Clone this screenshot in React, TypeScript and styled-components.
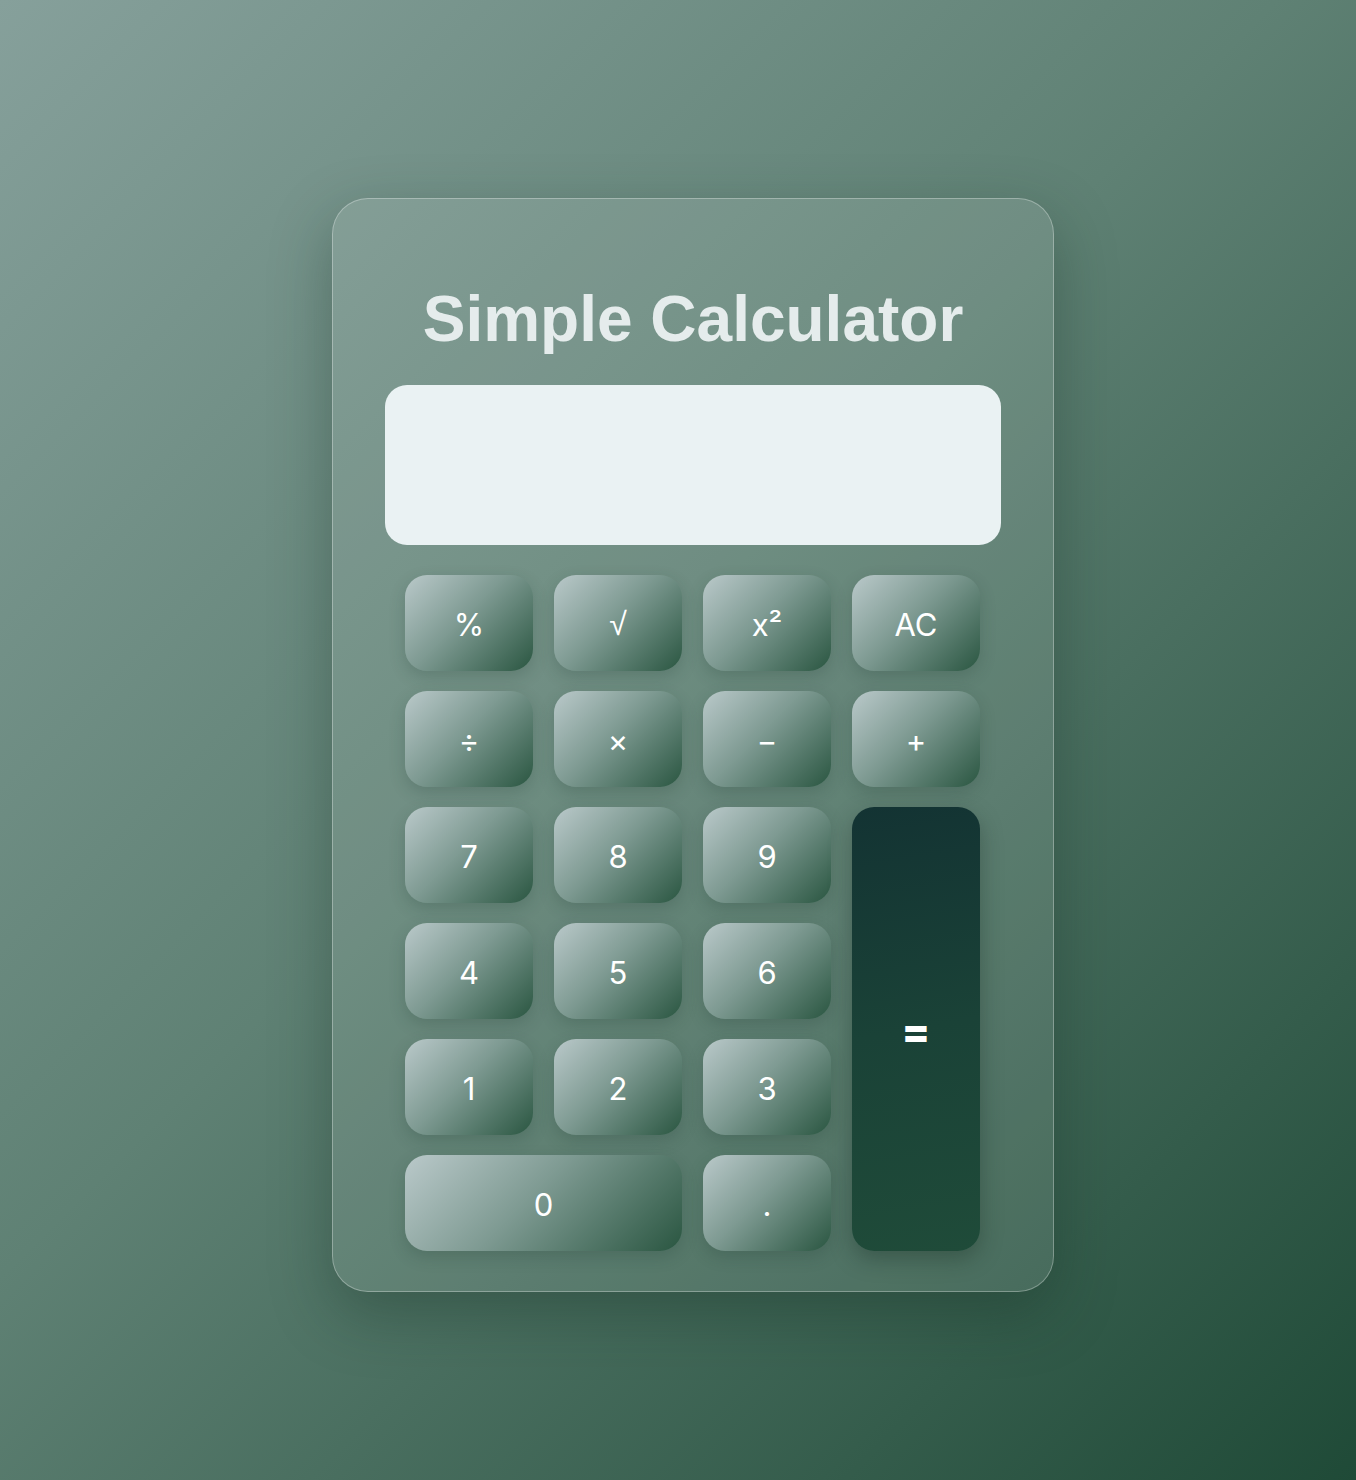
import React from "react";
import styled, { createGlobalStyle } from "styled-components";

const Global = createGlobalStyle`
  html, body { margin: 0; padding: 0; }
  body {
    min-height: 1480px;
    background: linear-gradient(135deg, #86a09b 0%, #5f8174 45%, #1f4a37 100%);
    font-family: Inter, "Liberation Sans", sans-serif;
  }
`;

const Page = styled.main`
  min-height: 1480px;
  box-sizing: border-box;
  display: flex;
  justify-content: center;
  align-items: flex-start;
  padding: 198px 0 0 30px;
`;

const Card = styled.section`
  width: 722px;
  box-sizing: border-box;
  padding: 88px 52px 40px;
  border-radius: 36px;
  border: 1px solid rgba(255, 255, 255, 0.3);
  background: rgba(255, 255, 255, 0.1);
  box-shadow: 0 22px 60px rgba(20, 45, 35, 0.35);
  display: flex;
  flex-direction: column;
`;

const Title = styled.h1`
  margin: 0 0 34px;
  font-family: "Liberation Sans", Arial, sans-serif;
  font-weight: 700;
  font-size: 64px;
  line-height: 64px;
  text-align: center;
  color: #e5ecec;
`;

const Display = styled.div`
  flex-shrink: 0;
  height: 160px;
  border-radius: 22px;
  background: #eaf2f3;
  margin-bottom: 30px;
`;

const Keys = styled.div`
  display: grid;
  grid-template-columns: repeat(4, 128px);
  grid-auto-rows: 96px;
  column-gap: 21px;
  row-gap: 20px;
  padding: 0 20px;
`;

const Key = styled.button<{ $span?: number; $tall?: boolean }>`
  grid-column: span ${(p) => p.$span ?? 1};
  ${(p) => (p.$tall ? "grid-row: span 4;" : "")}
  border: none;
  border-radius: 22px;
  background: linear-gradient(135deg, #bac9ca 0%, #7e9a92 45%, #2a5641 100%);
  box-shadow: 0 6px 16px rgba(30, 60, 48, 0.22);
  color: #ffffff;
  font-family: Inter, "Liberation Sans", sans-serif;
  font-size: 31px;
  font-weight: 400;
  display: flex;
  align-items: center;
  justify-content: center;
  cursor: pointer;
  padding: 2px 0 0;
`;

const EqualsKey = styled(Key)`
  background: linear-gradient(170deg, #133333 0%, #1a4237 50%, #1f4b39 100%);
  box-shadow: 0 8px 22px rgba(20, 40, 32, 0.35);
  font-family: Inter, "Liberation Sans", sans-serif;
  font-weight: 800;
  font-size: 42px;
`;

const Radical = styled.span`
  font-family: "DejaVu Sans", sans-serif;
  font-weight: 300;
  font-size: 32px;
`;

export default function App() {
  return (
    <>
      <Global />
      <Page>
        <Card>
          <Title>Simple Calculator</Title>
          <Display />
          <Keys>
            <Key>%</Key>
            <Key>
              <Radical>√</Radical>
            </Key>
            <Key>x²</Key>
            <Key>AC</Key>
            <Key>÷</Key>
            <Key>×</Key>
            <Key>−</Key>
            <Key>+</Key>
            <Key>7</Key>
            <Key>8</Key>
            <Key>9</Key>
            <EqualsKey $tall>=</EqualsKey>
            <Key>4</Key>
            <Key>5</Key>
            <Key>6</Key>
            <Key>1</Key>
            <Key>2</Key>
            <Key>3</Key>
            <Key $span={2}>0</Key>
            <Key>.</Key>
          </Keys>
        </Card>
      </Page>
    </>
  );
}
